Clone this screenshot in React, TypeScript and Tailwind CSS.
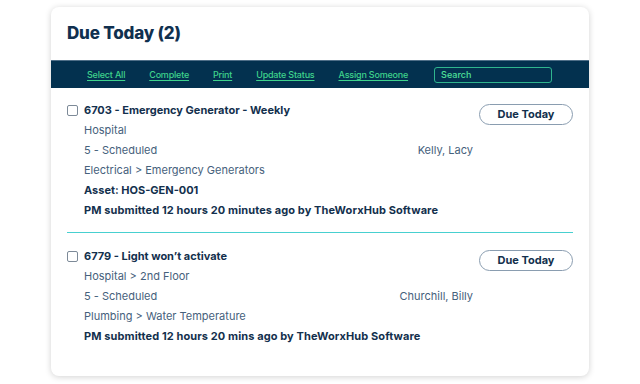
import React from 'react';

type Task = {
  title: string;
  location: string;
  status: string;
  assignee: string;
  category: string;
  asset?: string;
  submitted: string;
};

const tasks: Task[] = [
  {
    title: '6703 - Emergency Generator - Weekly',
    location: 'Hospital',
    status: '5 - Scheduled',
    assignee: 'Kelly, Lacy',
    category: 'Electrical > Emergency Generators',
    asset: 'Asset: HOS-GEN-001',
    submitted: 'PM submitted 12 hours 20 minutes ago by TheWorxHub Software',
  },
  {
    title: '6779 - Light won\u2019t activate',
    location: 'Hospital > 2nd Floor',
    status: '5 - Scheduled',
    assignee: 'Churchill, Billy',
    category: 'Plumbing > Water Temperature',
    submitted: 'PM submitted 12 hours 20 mins ago by TheWorxHub Software',
  },
];

const actions = ['Select All', 'Complete', 'Print', 'Update Status', 'Assign Someone'];

const TaskItem: React.FC<{ task: Task }> = ({ task }) => (
  <div className="flex gap-[6px]">
    <div className="flex-1">
      <div className="flex items-center h-[20px]">
        <span className="w-[11px] h-[11px] border border-[#7d8a98] rounded-[2px] mr-[6px] bg-white" />
        <span className="font-bold text-[#13304d]">{task.title}</span>
      </div>
      <div className="pl-[17px] text-[#46617c]">
        <div className="h-[20px] leading-[20px]">{task.location}</div>
        <div className="h-[20px] leading-[20px] flex justify-between">
          <span>{task.status}</span>
          <span>{task.assignee}</span>
        </div>
        <div className="h-[20px] leading-[20px]">{task.category}</div>
        {task.asset && (
          <div className="h-[20px] leading-[20px] font-bold text-[#13304d]">{task.asset}</div>
        )}
        <div className="h-[20px] leading-[20px] font-bold text-[#13304d] whitespace-nowrap tracking-[0.1px]">{task.submitted}</div>
      </div>
    </div>
    <div className="w-[94px] pt-[4px]">
      <div className="h-[21px] rounded-full border border-[#8a9db0] flex items-center justify-center font-bold text-[#13304d]">
        Due Today
      </div>
    </div>
  </div>
);

export default function App() {
  return (
    <div
      className="w-[640px] h-[384px] bg-white pt-[7px] pl-[51px]"
      style={{ fontFamily: 'Inter, "Noto Sans", sans-serif' }}
    >
      <div className="w-[538px] h-[369px] bg-white rounded-[8px] shadow-[0_1px_6px_rgba(0,0,0,0.18)] overflow-hidden text-[11px]">
        {/* header */}
        <div className="h-[53px] pl-[16px] flex items-center">
          <h1 className="text-[17px] font-extrabold text-[#10304f] tracking-[-0.2px]">Due Today (2)</h1>
        </div>

        {/* action bar */}
        <div className="h-[28px] bg-[#03314f] border-t border-[#4f6f88] flex items-center pl-[36px] gap-[24px]">
          {actions.map((a) => (
            <span key={a} className="text-[9px] font-medium text-[#3fd38c] underline underline-offset-2 tracking-[-0.2px]">
              {a}
            </span>
          ))}
          <div className="ml-[2px] w-[118px] h-[16px] border border-[#2fb58e] rounded-[3px] flex items-center pl-[6px]">
            <span className="text-[9px] font-medium text-[#4fe09a]">Search</span>
          </div>
        </div>

        {/* list */}
        <div className="pl-[16px] pr-[16px]">
          <div className="pt-[12px] pb-[12px] border-b border-[#48d0d0]">
            <TaskItem task={tasks[0]} />
          </div>
          <div className="pt-[13px]">
            <TaskItem task={tasks[1]} />
          </div>
        </div>
      </div>
    </div>
  );
}
